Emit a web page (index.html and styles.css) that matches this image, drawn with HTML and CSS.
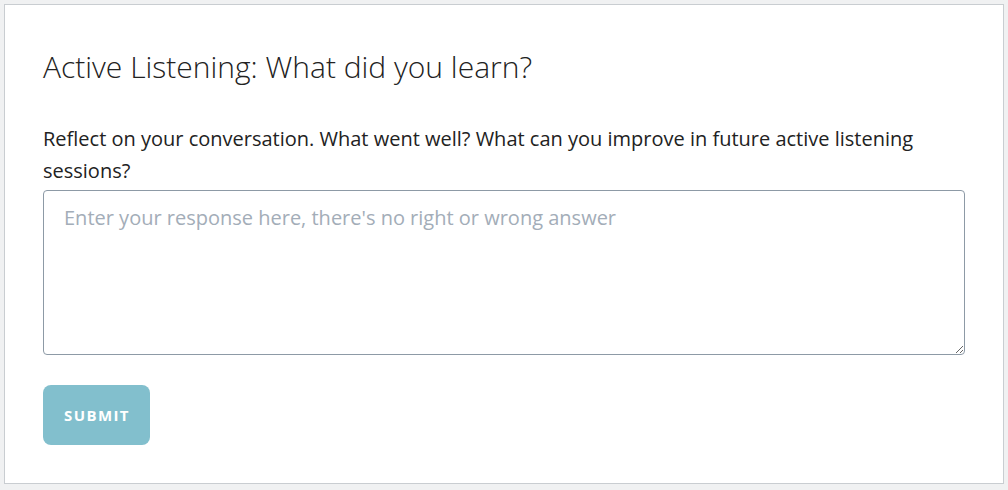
FILE: index.html
```html
<!DOCTYPE html>
<html>
<head>
<meta charset="utf-8">
<link rel="stylesheet" href="styles.css">
</head>
<body>
<div class="card">
  <h1 class="title">Active Listening: What did you learn?</h1>
  <p class="prompt">Reflect on your conversation. What went well? What can you improve in future active listening sessions?</p>
  <textarea class="response" placeholder="Enter your response here, there's no right or wrong answer"></textarea>
  <button class="submit">SUBMIT</button>
</div>
</body>
</html>
```
FILE: styles.css
```css
html, body {
  margin: 0;
  padding: 0;
}
body {
  background: #f0f1f2;
  padding: 4px;
  font-family: "Open Sans", "Liberation Sans", sans-serif;
}
.card {
  box-sizing: border-box;
  width: 1000px;
  height: 480px;
  background: #fff;
  border: 1px solid #c9cdd1;
  padding: 42px 38px 0 38px;
  display: flex;
  flex-direction: column;
  align-items: flex-start;
}
.title {
  margin: 0;
  font-weight: 300;
  font-size: 30px;
  line-height: 40px;
  color: #222;
}
.prompt {
  margin: 36px 0 0 0;
  font-size: 20px;
  line-height: 32px;
  color: #222;
  width: 922px;
}
.response {
  box-sizing: border-box;
  width: 922px;
  height: 165px;
  margin-top: 3px;
  border: 1px solid #8d9aa6;
  border-radius: 4px;
  padding: 14px 20px;
  font-family: "Open Sans", sans-serif;
  font-size: 20px;
  line-height: 26px;
  color: #222;
  resize: vertical;
}
.response::placeholder {
  color: #a3adb8;
}
.submit {
  margin-top: 30px;
  width: 107px;
  height: 60px;
  border: none;
  border-radius: 8px;
  background: #82bfcd;
  color: #fff;
  font-family: "Open Sans", sans-serif;
  font-weight: 700;
  font-size: 15px;
  letter-spacing: 1.4px;
  padding: 0 0 0 1px;
}
```
